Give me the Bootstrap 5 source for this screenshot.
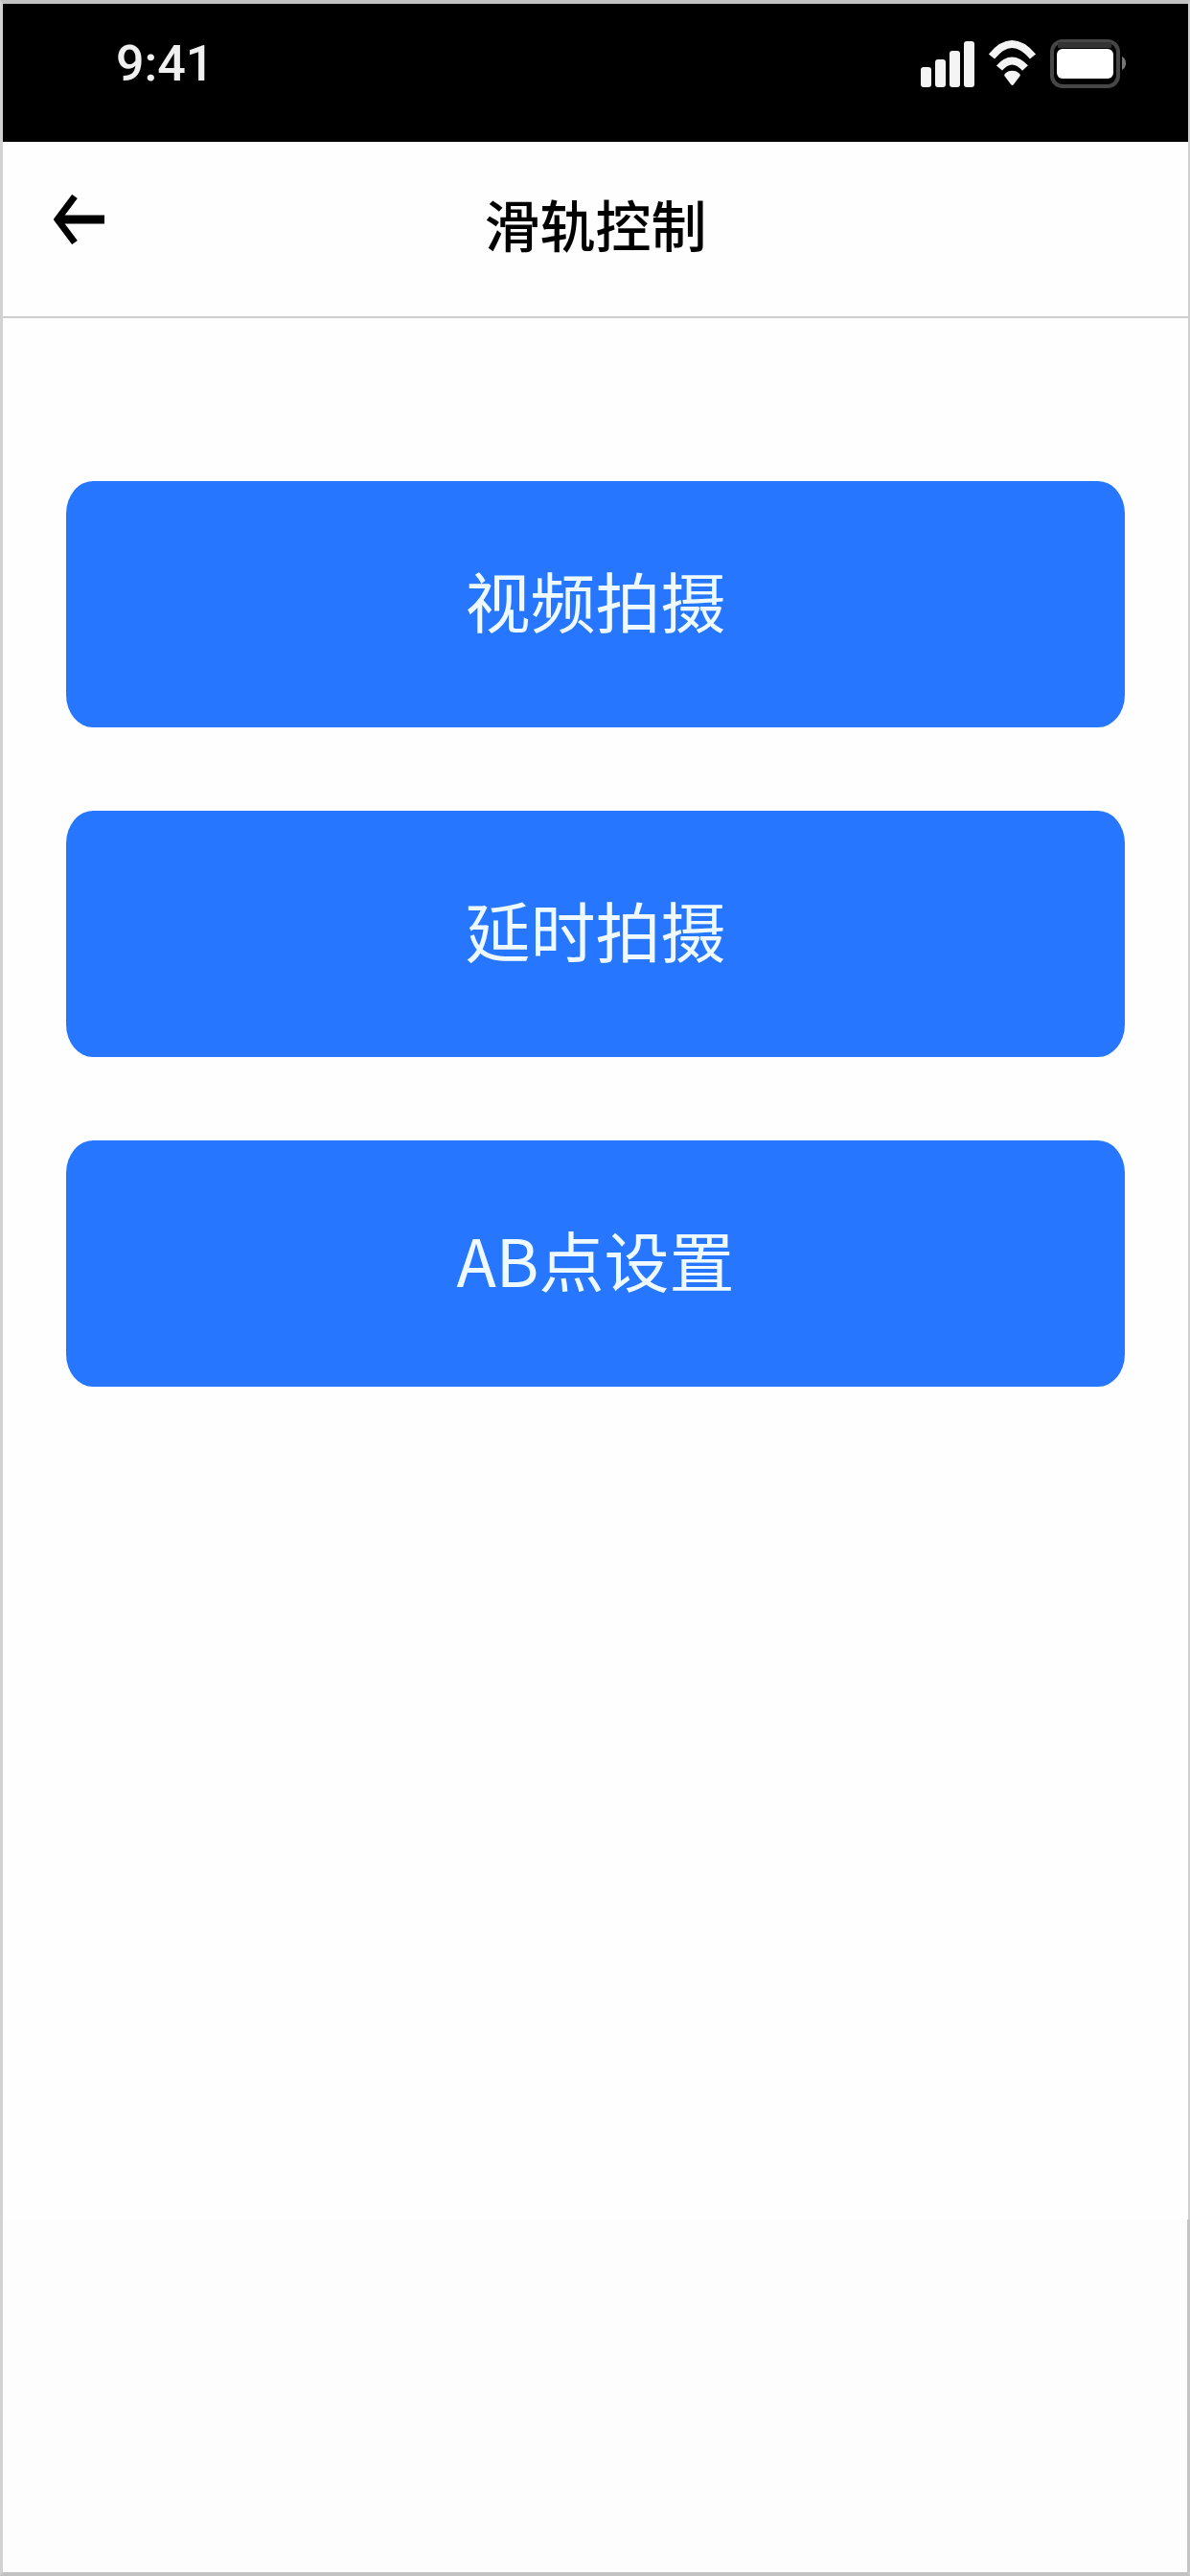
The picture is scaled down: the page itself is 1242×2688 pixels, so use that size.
<!DOCTYPE html>
<html lang="zh-CN">
<head>
<meta charset="utf-8">
<meta name="viewport" content="width=device-width, initial-scale=1">
<title>滑轨控制</title>
<link rel="stylesheet" href="https://cdn.jsdelivr.net/npm/bootstrap@5.3.0/dist/css/bootstrap.min.css">
<style>
  body { font-family: "Noto Sans CJK SC", sans-serif; background: #fefefe; color: #000; }
  .phone-frame { border: solid; border-width: 4px 2px 4px 3px; border-color: #c2c2c2 #cfcfcf #c2c2c2 #d2d2d2; }
  .status-bar { height: 144px; padding: 0 64px 18px 118px; background: #000; }
  .status-time { font: 500 52px/60px Roboto, sans-serif; color: #f0f0f0; }
  .title-bar { height: 184px; padding: 0 53px 20px; border-bottom: 2px solid #cecece; }
  .title-bar h1 { font-size: 58px; line-height: 64px; font-weight: 500; }
  .back-link { width: 53px; color: #000; }
  .mode-list { padding: 170px 66px 0; gap: 87px; }
  .mode-btn {
    --bs-btn-color: #eefaff; --bs-btn-bg: #2676ff; --bs-btn-border-width: 0;
    --bs-btn-hover-color: #fff; --bs-btn-hover-bg: #1768f0; --bs-btn-active-bg: #1768f0; --bs-btn-active-color: #fff;
    height: 257px; padding: 0 0 10px; font-size: 68px; line-height: 80px; font-weight: 400; border-radius: 28px / 34px;
  }
  .bottom-area { height: 368px; margin-right: -2px; background: #fdfdfd; border-right: 3px solid #c4c4c4; }
</style>
</head>
<body>
<div class="phone-frame min-vh-100 d-flex flex-column">
  <div class="status-bar d-flex align-items-center justify-content-between">
    <span class="status-time">9:41</span>
    <svg width="216" height="52" viewBox="0 0 216 52" role="img" aria-label="信号、无线网络和电量">
      <g fill="#f4f4f4">
        <rect x="1" y="29" width="11" height="21" rx="3"/>
        <rect x="16" y="21" width="11" height="29" rx="3"/>
        <rect x="31" y="12" width="11" height="38" rx="3"/>
        <rect x="46" y="2" width="11" height="48" rx="3"/>
        <path d="M90 35c3-3 10-3 13 0q3 2 1 4l-6 8q-1 2-3 0l-6-8q-2-2 1-4z"/>
      </g>
      <g fill="none" stroke="#f4f4f4" stroke-width="8">
        <path d="M75 18q21-26 43 0"/>
        <path d="M83 30q13-15 27 0"/>
      </g>
      <rect x="138" y="2" width="69" height="47" rx="11" fill="#000" stroke="#464646" stroke-width="4"/>
      <path d="M144 6h56" stroke="#333" stroke-width="6"/>
      <rect x="143" y="10" width="59" height="31" rx="6" fill="#fff"/>
      <path d="M211 18q4 2 4 7t-4 7z" fill="#777"/>
    </svg>
  </div>

  <header class="title-bar d-flex align-items-center justify-content-between">
    <a class="back-link d-flex" href="#" aria-label="返回">
      <svg width="53" height="52" viewBox="0 0 53 52" fill="none" stroke="currentColor" stroke-width="7" aria-hidden="true">
        <path d="M22 2 4 26l18 24"/><path d="M6 26h47" stroke-width="9"/>
      </svg>
    </a>
    <h1 class="m-0 pt-2">滑轨控制</h1>
    <span class="back-link"></span>
  </header>

  <main class="mode-list d-flex flex-column flex-grow-1">
    <button type="button" class="btn mode-btn w-100">视频拍摄</button>
    <button type="button" class="btn mode-btn w-100">延时拍摄</button>
    <button type="button" class="btn mode-btn w-100">AB点设置</button>
  </main>
  <div class="bottom-area"></div>
</div>
<script src="https://cdn.jsdelivr.net/npm/bootstrap@5.3.0/dist/js/bootstrap.bundle.min.js"></script>
</body>
</html>
